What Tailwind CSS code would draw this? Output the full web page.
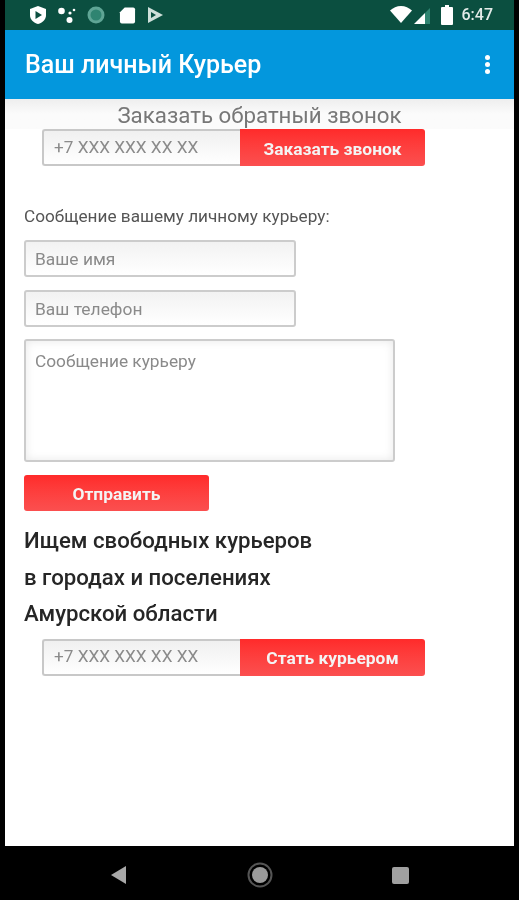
<!DOCTYPE html>
<html lang="ru">
<head>
  <meta charset="UTF-8">
  <meta name="viewport" content="width=device-width, initial-scale=1.0">
  <title>Ваш личный Курьер</title>
  <script src="https://cdn.jsdelivr.net/npm/@tailwindcss/browser@4"></script>
</head>
<body class="bg-black font-['Roboto',sans-serif]">

<div class="h-[900px] w-[519px] flex flex-col overflow-hidden px-[5px] blur-[0.7px]">

  <!-- Status bar -->
  <div class="h-[30px] shrink-0 bg-[#0b4f40] flex items-center justify-between pl-[23px] pr-[21px] text-white">
    <div class="flex items-center">
      <svg class="w-[20px] h-[20px]" viewBox="0 0 20 20"><path fill="#fff" d="M10 1l8 3v6c0 4.500-3.400 7.800-8 9-4.600-1.200-8-4.500-8-9V4z"/><path fill="#0b4f40" d="M7.500 6l6.500 4-6.500 4z"/></svg>
      <svg class="w-[20px] h-[20px] ml-[9px]" viewBox="0 0 20 20" fill="#fff"><circle cx="4.500" cy="6" r="3.300"/><circle cx="12.500" cy="15" r="3"/><circle cx="13" cy="8" r="1.600"/><circle cx="17" cy="5" r="1.300"/></svg>
      <svg class="w-[20px] h-[20px] ml-[9px]" viewBox="0 0 20 20"><circle cx="10" cy="10" r="8.500" fill="#5fa595"/><circle cx="10" cy="10" r="5.500" fill="#2f8471"/></svg>
      <svg class="w-[17px] h-[20px] ml-[13px]" viewBox="0 0 18 20"><path fill="#fff" d="M6 2h9a2 2 0 0 1 2 2v13a2 2 0 0 1-2 2H3a2 2 0 0 1-2-2V7z"/></svg>
      <svg class="w-[18px] h-[20px] ml-[10px]" viewBox="0 0 18 20"><path fill="#cfe0da" d="M2 2l15 8-15 8z"/><path fill="#0b4f40" d="M5 7l5 3-5 3z"/></svg>
    </div>
    <div class="flex items-center">
      <svg class="w-[22px] h-[18px]" viewBox="0 0 22 18"><path fill="#fff" d="M0 4.500C3 1.800 6.800 0 11 0s8 1.800 11 4.500L11 17z"/></svg>
      <svg class="w-[17px] h-[17px] ml-[2px]" viewBox="0 0 17 17"><path fill="#fff" d="M0 17L11 6v11z"/><path fill="#2f8471" d="M11 6l5-5v16h-5z"/></svg>
      <svg class="w-[12px] h-[20px] ml-[10px]" viewBox="0 0 12 20"><path fill="#fff" d="M4 0h4v2h3a1 1 0 0 1 1 1v16a1 1 0 0 1-1 1H1a1 1 0 0 1-1-1V3a1 1 0 0 1 1-1h3z"/></svg>
      <span class="ml-[9px] text-[16px] font-medium text-[#e3ebe8]">6:47</span>
    </div>
  </div>

  <!-- App bar -->
  <header class="h-[69px] shrink-0 bg-[#0397dd] flex items-center justify-between pl-[20px] pr-[24px] text-white">
    <h1 class="text-[25px] font-medium">Ваш личный Курьер</h1>
    <div class="flex flex-col gap-[2px]">
      <span class="w-[5px] h-[5px] rounded-full bg-white"></span>
      <span class="w-[5px] h-[5px] rounded-full bg-white"></span>
      <span class="w-[5px] h-[5px] rounded-full bg-white"></span>
    </div>
  </header>

  <main class="flex-1 bg-white flex flex-col">
    <!-- Callback -->
    <div class="h-[30px] shrink-0 bg-gradient-to-b from-[#eeeeee] via-[#fbfbfb] to-[#fbfbfb] text-center text-[22.300px] leading-[32px] text-[#777777]">Заказать обратный звонок</div>
    <div class="flex pl-[37px] h-[37px] shrink-0">
      <input class="w-[198px] border-2 border-r-0 border-[#c8c8c8] rounded-l-[3px] bg-gradient-to-b from-[#f0f0f0] to-white pl-[10px] text-[17.200px] placeholder:text-[#8a8a8a] outline-none" placeholder="+7 XXX XXX XX XX">
      <button class="w-[185px] rounded-r-[3px] bg-gradient-to-b from-[#ff2a2a] to-[#fb4f4f] pt-[3px] text-[17.400px] font-bold text-[#f4f4f4]">Заказать звонок</button>
    </div>

    <!-- Message form -->
    <div class="pl-[19px] pt-[40px] flex flex-col items-start">
      <p class="text-[17.200px] leading-[20px] text-[#555555]">Сообщение вашему личному курьеру:</p>
      <input class="mt-[14px] w-[272px] h-[37px] border-2 border-[#cccccc] rounded-[3px] bg-gradient-to-b from-[#f2f2f2] to-white pl-[9px] text-[17.400px] placeholder:text-[#8a8a8a] outline-none" placeholder="Ваше имя">
      <input class="mt-[13px] w-[272px] h-[37px] border-2 border-[#cccccc] rounded-[3px] bg-gradient-to-b from-[#f2f2f2] to-white pl-[9px] text-[17.400px] placeholder:text-[#8a8a8a] outline-none" placeholder="Ваш телефон">
      <textarea class="mt-[12px] w-[371px] h-[123px] border-2 border-[#cccccc] rounded-[3px] bg-white shadow-[inset_0_0_10px_#e8e8e8] pl-[9px] pt-[10px] text-[17.300px] leading-[20px] placeholder:text-[#8a8a8a] outline-none resize-none" placeholder="Сообщение курьеру"></textarea>
      <button class="mt-[13px] w-[185px] h-[36px] rounded-[3px] bg-gradient-to-b from-[#ff2a2a] to-[#fb4f4f] pt-[3px] text-[17.400px] font-bold text-[#f4f4f4]">Отправить</button>

      <h2 class="mt-[11px] text-[22.200px] leading-[36.500px] font-medium text-[#262626]">Ищем свободных курьеров<br>в городах и поселениях<br>Амурской области</h2>
    </div>

    <div class="flex pl-[37px] h-[37px] shrink-0 mt-[7px]">
      <input class="w-[198px] border-2 border-r-0 border-[#c8c8c8] rounded-l-[3px] bg-gradient-to-b from-[#f0f0f0] to-white pl-[10px] text-[17.200px] placeholder:text-[#8a8a8a] outline-none" placeholder="+7 XXX XXX XX XX">
      <button class="w-[185px] rounded-r-[3px] bg-gradient-to-b from-[#ff2a2a] to-[#fb4f4f] pt-[3px] text-[17.400px] font-bold text-[#f4f4f4]">Стать курьером</button>
    </div>
  </main>

  <!-- Nav bar -->
  <nav class="h-[54px] shrink-0 bg-black flex items-center justify-between pl-[106px] pr-[105px] pt-[4px]">
    <svg class="w-[16px] h-[18px]" viewBox="0 0 16 18"><path fill="#a8a8a8" d="M15 0v18L0 9z"/></svg>
    <svg class="w-[26px] h-[26px]" viewBox="0 0 26 26"><circle cx="13" cy="13" r="11.500" fill="none" stroke="#555555" stroke-width="2"/><circle cx="13" cy="13" r="8" fill="#9a9a9a"/></svg>
    <span class="w-[17px] h-[17px] rounded-[2px] bg-[#a0a0a0]"></span>
  </nav>
</div>

</body>
</html>
